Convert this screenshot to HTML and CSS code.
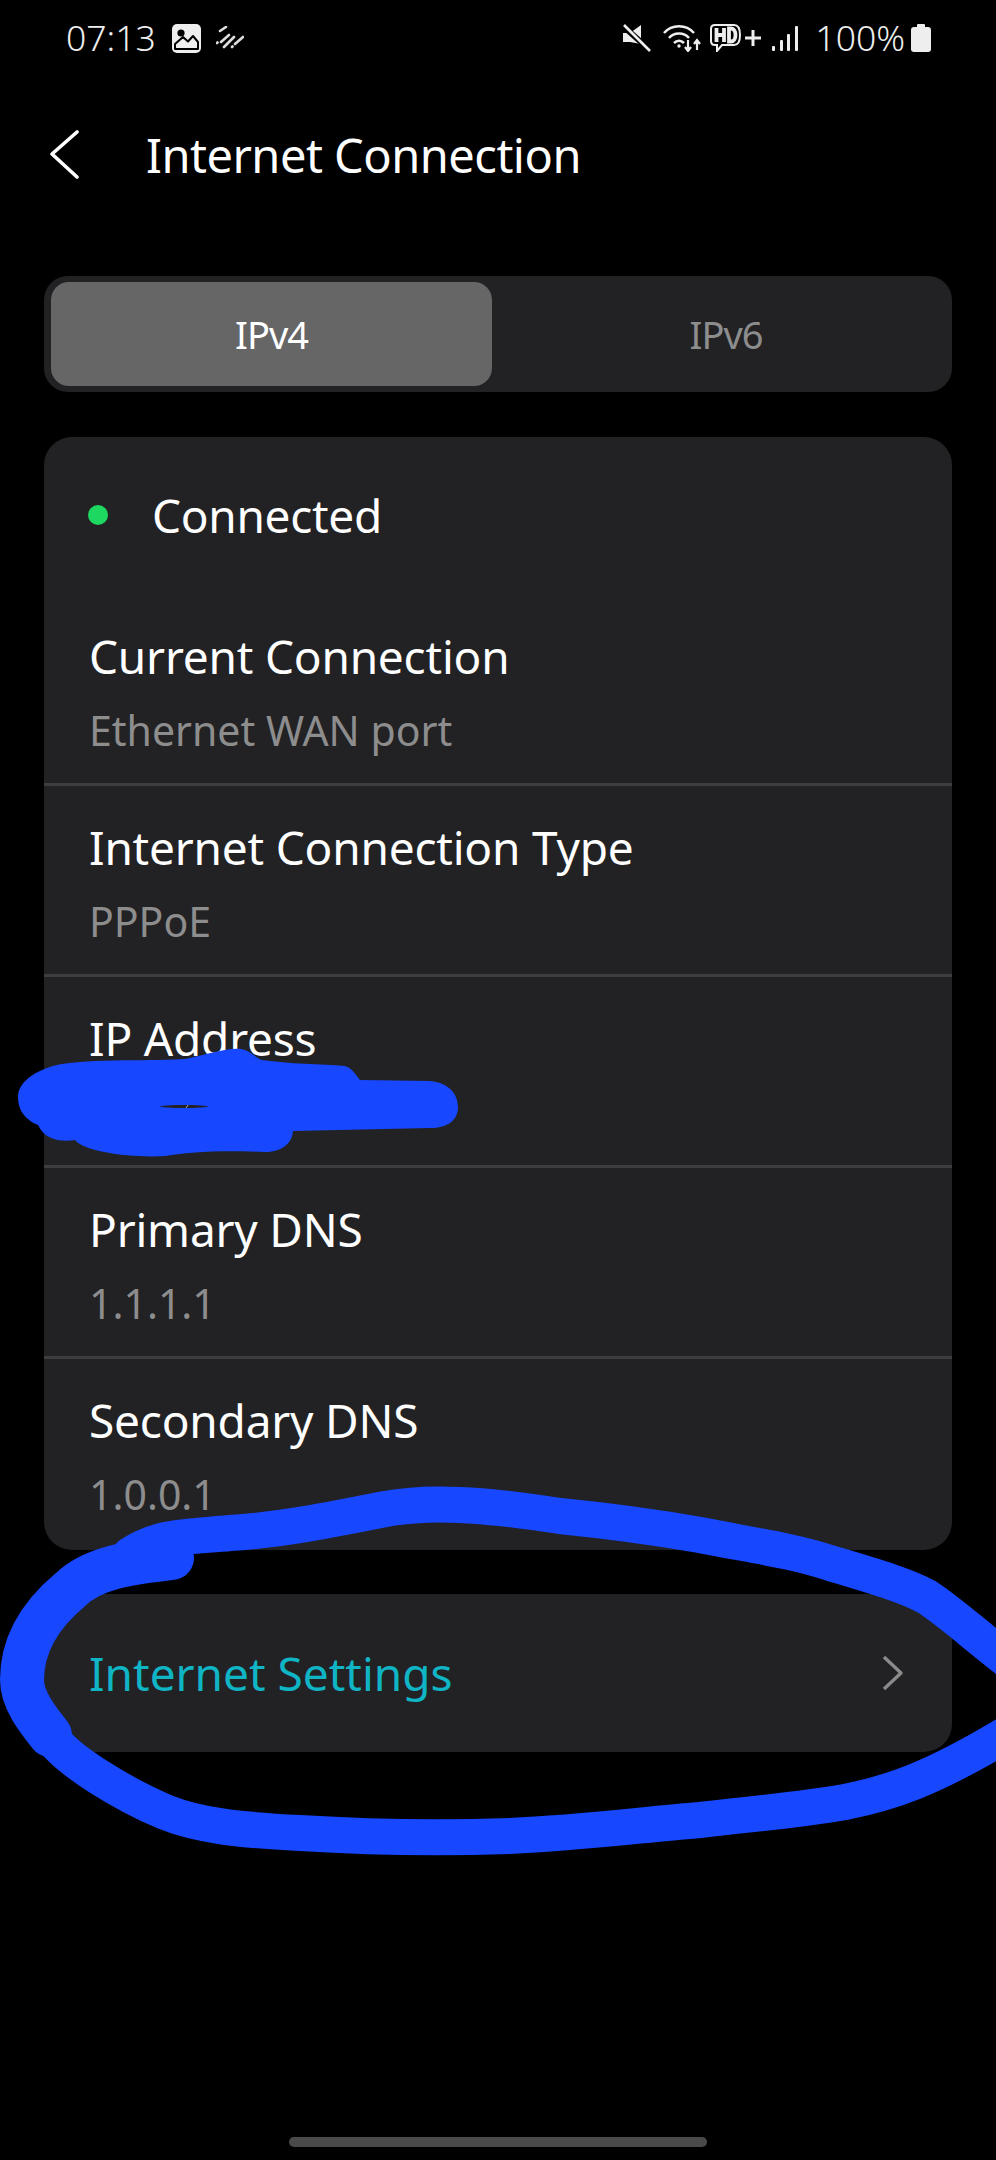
FILE: index.html
```html
<!DOCTYPE html>
<html lang="en">

<head>
  <meta charset="UTF-8" />
  <meta name="viewport" content="width=device-width, initial-scale=1.0" />
  <title>Internet Connection</title>
  <link rel="stylesheet" href="styles.css">
</head>

<body>
  <div class="status-bar">
    <span class="clock">07:13</span>
    <svg class="icon-picture" width="29" height="29" viewBox="0 0 29 29">
      <rect x="0" y="0" width="29" height="29" rx="5" fill="#eee" />
      <circle cx="9" cy="9" r="3.6" fill="#000" />
      <path d="M3 25 V20 L11 13 L16 17.500 L21 12 L26 18 V25 Z" fill="#eee" stroke="#000" stroke-width="2" stroke-linejoin="round" />
    </svg>
    <svg class="icon-dashes" width="28" height="24" viewBox="0 0 28 24" stroke="#ddd" stroke-width="2.6" stroke-linecap="round">
      <path d="M4 5 L10 1 M1 17 L1.500 16.500 M5 16 L13 9 M8 21 L18 11 M16 21 L16.500 20.500 M19 18 L27 11" />
    </svg>
    <div class="status-right">
      <svg class="icon-mute" width="28" height="28" viewBox="0 0 28 28">
        <path d="M0 9 H7 L18 1 V20 L7 18 H0 Z" fill="#eee" />
        <path d="M1 3 L27 26" stroke="#000" stroke-width="6" />
        <path d="M1 1 L27 27" stroke="#eee" stroke-width="2.6" />
      </svg>
      <svg class="icon-wifi" width="38" height="28" viewBox="0 0 38 28" fill="none" stroke="#eee" stroke-width="2.6">
        <path d="M1 9 C9 0 23 0 31 9" />
        <path d="M6 14 C11 8 21 8 26 14" />
        <path d="M11 19 C14 16 18 16 21 19" />
        <circle cx="16" cy="22" r="1.7" fill="#eee" stroke="none" />
        <path d="M25 16 V26 M22 23 L25 27 L28 23 M34 26 V17 M31 20 L34 16 L37 20" stroke-width="2.2" />
      </svg>
      <svg class="icon-hd" width="31" height="28" viewBox="0 0 31 28">
        <path d="M5 1 H24 C28 1 30 4 30 11 C30 18 28 21 24 21 H12 L7 27 V21 H5 C2 21 1 19 1 17 V5 C1 3 2 1 5 1 Z" fill="none" stroke="#eee" stroke-width="2" />
        <path d="M6.500 4 V18 M14 4 V18 M6.500 11 H14 M19 4.500 V17.500 H21 C27 17.500 27 4.500 21 4.500 Z" fill="none" stroke="#eee" stroke-width="3.800" />
      </svg>
      <svg class="icon-plus" width="16" height="16" viewBox="0 0 16 16" stroke="#eee" stroke-width="3">
        <path d="M8 0 V16 M0 8 H16" />
      </svg>
      <svg class="icon-signal" width="26" height="25" viewBox="0 0 26 25" fill="#eee">
        <rect x="0" y="20" width="3" height="5" rx="1" />
        <rect x="8" y="14" width="3" height="11" rx="1" />
        <rect x="15" y="8" width="3" height="17" rx="1" />
        <rect x="23" y="0" width="3" height="25" rx="1" />
      </svg>
      <span class="battery-text">100%</span>
      <svg class="icon-battery" width="20" height="28" viewBox="0 0 20 28" fill="#eee">
        <rect x="6" y="0" width="8" height="4" rx="1" />
        <rect x="0" y="3" width="20" height="25" rx="3" />
      </svg>
    </div>
  </div>

  <header class="app-header">
    <svg class="back" width="30" height="50" viewBox="0 0 30 50" fill="none" stroke="#fff" stroke-width="3.6" stroke-linecap="round" stroke-linejoin="round">
      <path d="M27 2 L2 24 L27 47" />
    </svg>
    <h1>Internet Connection</h1>
  </header>

  <main class="content">
    <div class="tabs">
      <div class="tab selected">IPv4</div>
      <div class="tab other">IPv6</div>
    </div>

    <section class="card details">
      <div class="connection-status">
        <span class="dot"></span>
        <span class="status-text">Connected</span>
      </div>
      <div class="row">
        <div class="row-title">Current Connection</div>
        <div class="row-value">Ethernet WAN port</div>
      </div>
      <div class="row">
        <div class="row-title">Internet Connection Type</div>
        <div class="row-value">PPPoE</div>
      </div>
      <div class="row">
        <div class="row-title">IP Address</div>
        <div class="row-value">&nbsp;</div>
      </div>
      <div class="row">
        <div class="row-title">Primary DNS</div>
        <div class="row-value">1.1.1.1</div>
      </div>
      <div class="row">
        <div class="row-title">Secondary DNS</div>
        <div class="row-value">1.0.0.1</div>
      </div>
    </section>

    <section class="card settings">
      <span class="settings-link">Internet Settings</span>
      <svg width="22" height="36" viewBox="0 0 22 36" fill="none" stroke="#8a8a8b" stroke-width="3.400" stroke-linejoin="round">
        <path d="M2 2 L19 18 L2 34" />
      </svg>
    </section>
  </main>

  <div class="home-bar"></div>

  <!-- marker scribbles drawn over the screenshot -->
  <svg class="scribble" width="996" height="2160" viewBox="0 0 996 2160">
    <path class="blot" d="M18 1097 C18 1080 40 1068 62 1064 C100 1058 170 1062 190 1058 C215 1052 235 1046 245 1050 C252 1053 256 1058 262 1060 C290 1064 320 1064 345 1066 C352 1068 356 1075 360 1080 L430 1081 C450 1083 458 1095 458 1107 C458 1120 448 1128 430 1128 L293 1131 C292 1145 280 1152 265 1152 C220 1150 190 1152 165 1156 C130 1158 85 1152 75 1140 C60 1142 45 1140 38 1125 C25 1120 18 1110 18 1097 Z" />
    <ellipse cx="184" cy="1106.500" rx="24" ry="1.500" fill="#232325" />
    <path d="M186 1108 L188 1105" stroke="#aaa" stroke-width="1" />
    <path class="circle thick" d="M172 1558 C140 1562 95 1565 70 1590 C40 1615 22 1645 22 1680 C22 1700 38 1720 50 1735" />
    <path class="circle" d="M50 1735 C65 1760 125 1795 165 1812 C200 1826 240 1830 300 1833 C380 1838 450 1838 510 1836 C580 1833 640 1825 700 1820 C760 1813 800 1810 845 1802 C890 1793 930 1780 1005 1735" />
    <path class="circle" d="M130 1555 C160 1535 190 1537 230 1533 C280 1530 330 1520 380 1510 C410 1504 440 1504 460 1505 C490 1506 520 1510 560 1516 C620 1522 660 1528 700 1535 C750 1545 790 1550 830 1563 C870 1575 905 1585 927 1597 C950 1612 975 1635 1010 1662" />
  </svg>
</body>

</html>
```

FILE: styles.css
```css
* {
  box-sizing: border-box;
}

body {
  margin: 0;
  width: 996px;
  height: 2160px;
  position: relative;
  overflow: hidden;
  background-color: #000;
  color: #fff;
  font-family: "Noto Sans", sans-serif;
}

/* status bar */
.status-bar {
  display: flex;
  align-items: center;
  height: 76px;
  padding: 0 65px 0 66px;
  color: #eee;
}

.clock,
.battery-text {
  margin-bottom: 3px;
  font-size: 35.500px;
  font-weight: 300;
}

.icon-picture {
  margin-left: 16px;
}

.icon-dashes {
  margin-left: 15px;
}

.status-right {
  display: flex;
  align-items: center;
  margin-left: auto;
}

.icon-wifi {
  margin-left: 12px;
}

.icon-hd {
  margin-left: 9px;
}

.icon-plus {
  margin-left: 4px;
}

.icon-signal {
  margin-left: 11px;
}

.battery-text {
  margin-left: 17px;
}

.icon-battery {
  margin-left: 6px;
}

/* header */
.app-header {
  display: flex;
  align-items: center;
  height: 158px;
  padding-left: 50px;
}

.app-header h1 {
  margin: 0 0 0 66px;
  font-size: 47px;
  font-weight: 400;
  letter-spacing: -0.5px;
}

/* content */
.content {
  padding: 42px 44px 0;
}

.tabs {
  display: flex;
  height: 116px;
  padding: 6px 7px;
  border-radius: 24px;
  background-color: #222224;
}

.tab {
  display: flex;
  align-items: center;
  justify-content: center;
  border-radius: 18px;
  font-size: 38px;
  letter-spacing: -1px;
  color: #8d8d8e;
}

.tab.selected {
  width: 441px;
  background-color: #666667;
  color: #fff;
}

.tab.other {
  flex: 1;
  padding-left: 15px;
}

.card {
  border-radius: 28px;
  background-color: #222224;
}

.details {
  margin-top: 45px;
}

.connection-status {
  display: flex;
  align-items: center;
  height: 158px;
  padding-left: 44px;
  padding-bottom: 2px;
}

.dot {
  width: 20px;
  height: 20px;
  border-radius: 50%;
  background-color: #1ed760;
}

.status-text {
  margin-left: 44px;
  font-size: 46px;
  letter-spacing: -0.3px;
}

.row {
  height: 191px;
  padding: 33px 45px 0;
  border-bottom: 3px solid #3d3d3f;
}

.row:last-child {
  border-bottom: none;
}

.row-title {
  height: 77px;
  line-height: 56px;
  font-size: 46px;
  letter-spacing: -0.2px;
}

.row-value {
  line-height: 50px;
  font-size: 41px;
  color: #8d8d8e;
}

.settings {
  display: flex;
  align-items: center;
  justify-content: space-between;
  height: 158px;
  margin-top: 44px;
  padding: 0 48px 0 45px;
}

.settings-link {
  font-size: 46px;
  color: #10b5c5;
}

.home-bar {
  position: absolute;
  left: 289px;
  top: 2137px;
  width: 418px;
  height: 10px;
  border-radius: 5px;
  background-color: #4a4a4a;
}

.scribble {
  position: absolute;
  left: 0;
  top: 0;
  pointer-events: none;
}

.blot {
  fill: #1747ff;
}

.circle {
  fill: none;
  stroke: #1747ff;
  stroke-width: 36;
  stroke-linecap: round;
  stroke-linejoin: round;
}

.circle.thick {
  stroke-width: 44;
}
```
